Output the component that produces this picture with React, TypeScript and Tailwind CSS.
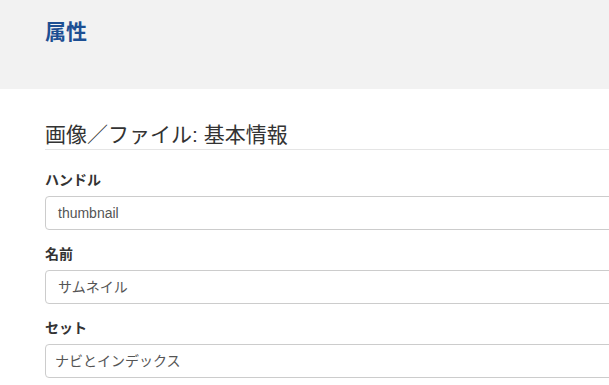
import React from "react";

const font = { fontFamily: '"Liberation Sans", "Noto Sans CJK JP", sans-serif' };

function Field({ label, value, pl }: { label: string; value: string; pl: string }) {
  return (
    <div className="mb-[14px]">
      <div className="text-[14px] leading-[20px] font-bold text-[#333333] mb-[6px]">{label}</div>
      <div
        className={`h-[34px] w-[700px] border border-[#cccccc] rounded-[4px] bg-white flex items-center ${pl} text-[14px] text-[#555555]`}
      >
        {value}
      </div>
    </div>
  );
}

export default function App() {
  return (
    <div className="w-[609px] h-[385px] overflow-hidden bg-white" style={font}>
      <div className="h-[89px] bg-[#f2f2f2] pl-[45px] pt-[20px]">
        <div className="text-[21px] leading-[24px] font-bold text-[#1d4f93]">属性</div>
      </div>
      <div className="pl-[45px]">
        <div className="mt-[34px] w-[700px] border-b border-[#e5e5e5] pb-[3px] text-[21px] leading-[23px] text-[#333333]">
          画像／ファイル: 基本情報
        </div>
        <div className="mt-[20px]">
          <Field label="ハンドル" value="thumbnail" pl="pl-[12px]" />
          <Field label="名前" value="サムネイル" pl="pl-[12px]" />
          <Field label="セット" value="ナビとインデックス" pl="pl-[9px]" />
        </div>
      </div>
    </div>
  );
}
